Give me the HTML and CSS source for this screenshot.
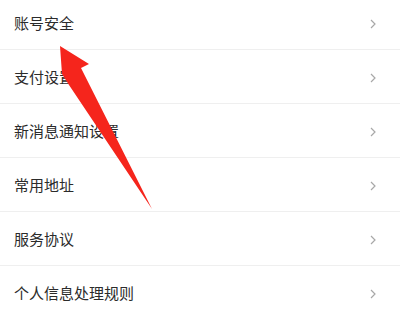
FILE: index.html
```html
<!DOCTYPE html>
<html lang="zh-CN">
<head>
<meta charset="utf-8">
<link rel="stylesheet" href="styles.css">
</head>
<body>
<div class="page">
  <ul class="list">
    <li class="row"><span class="label">账号安全</span><svg class="chev" viewBox="0 0 6 10"><polyline points="1,1 5,5 1,9"/></svg></li>
    <li class="row"><span class="label">支付设置</span><svg class="chev" viewBox="0 0 6 10"><polyline points="1,1 5,5 1,9"/></svg></li>
    <li class="row"><span class="label">新消息通知设置</span><svg class="chev" viewBox="0 0 6 10"><polyline points="1,1 5,5 1,9"/></svg></li>
    <li class="row"><span class="label">常用地址</span><svg class="chev" viewBox="0 0 6 10"><polyline points="1,1 5,5 1,9"/></svg></li>
    <li class="row"><span class="label">服务协议</span><svg class="chev" viewBox="0 0 6 10"><polyline points="1,1 5,5 1,9"/></svg></li>
    <li class="row"><span class="label">个人信息处理规则</span><svg class="chev" viewBox="0 0 6 10"><polyline points="1,1 5,5 1,9"/></svg></li>
  </ul>
  <svg class="arrow" viewBox="0 0 400 318" width="400" height="318">
    <polygon points="60,46 89,64 81,68 152,209 69,85 62,74"/>
  </svg>
</div>
</body>
</html>
```
FILE: styles.css
```css
html, body {
  margin: 0;
  padding: 0;
  background: #fff;
}
.page {
  position: relative;
  width: 400px;
  height: 318px;
  overflow: hidden;
  font-family: "Noto Sans CJK SC", "Noto Sans", sans-serif;
}
.list {
  list-style: none;
  margin: -4px 0 0 0;
  padding: 0;
}
.row {
  height: 53px;
  border-bottom: 1px solid #efefef;
  display: flex;
  align-items: center;
  justify-content: space-between;
  padding: 0 24px 0 14px;
}
.label {
  font-size: 15px;
  color: #2b2b2b;
  line-height: 1;
}
.chev {
  width: 6px;
  height: 10px;
  margin-top: 2px;
}
.chev polyline {
  fill: none;
  stroke: #a8a8a8;
  stroke-width: 1.2;
}
.arrow {
  position: absolute;
  left: 0;
  top: 0;
}
.arrow polygon {
  fill: #f5251c;
}
```
